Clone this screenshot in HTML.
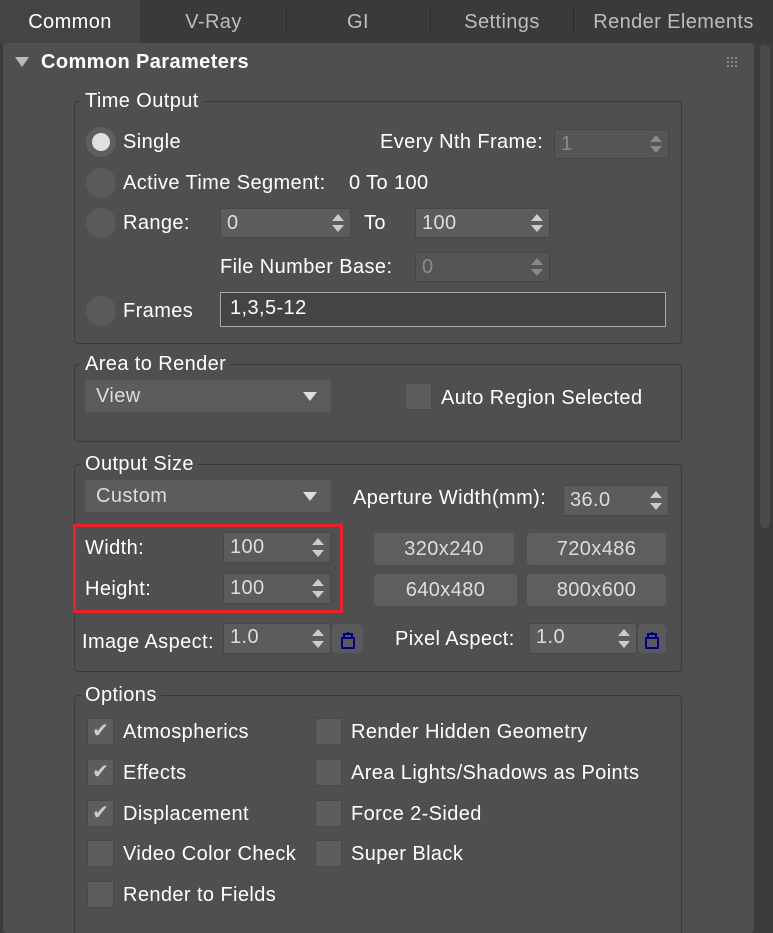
<!DOCTYPE html>
<html style="overflow:hidden;width:773px;height:933px"><head><meta charset="utf-8"><style>
*{box-sizing:border-box;margin:0;padding:0}
body{width:773px;height:933px;background:#3a3a3a;font-family:"Liberation Sans",sans-serif;color:#fff;position:relative;overflow:hidden;font-size:20px;letter-spacing:.4px}
.a{position:absolute;white-space:nowrap}
.tab{position:absolute;top:0;height:44px;line-height:44px;text-align:center;color:#bdbdbd;font-size:20px}
.sep{position:absolute;top:8px;width:1px;height:24px;background:#2c2c2c}
.panel{position:absolute;left:3px;top:43px;width:751px;height:890px;background:#4f4f4f;border-radius:4px}
.grp{position:absolute;border:1px solid #3a3a3a;border-radius:4px}
.gl{position:absolute;background:#4f4f4f;padding:0 4px;line-height:22px}
.sp{position:absolute;background:#5c5c5c;border:1px solid #474747;color:#ddd;padding-left:6px}
.sp.dis{color:#8a8a8a;background:#555}
.ar{position:absolute;right:6px;width:0;height:0;border-left:6px solid transparent;border-right:6px solid transparent}
.up{border-bottom:7px solid #ccc;top:5px}.dn{border-top:7px solid #ccc;bottom:5px}
.dis .up{border-bottom-color:#888}.dis .dn{border-top-color:#888}
.rad{position:absolute;width:30px;height:30px;border-radius:50%;background:#5a5a5a}
.cb{position:absolute;width:27px;height:27px;background:#5d5d5d;border:1px solid #4a4a4a;color:#ccc;font-size:20px;line-height:25px;text-align:center;letter-spacing:0}
.btn{position:absolute;background:#5e5e5e;border-radius:4px;color:#ddd;text-align:center}
.dd{position:absolute;background:#5c5c5c;color:#ddd;padding-left:11px}
.dd:after{content:"";position:absolute;right:14px;top:12px;border-left:7px solid transparent;border-right:7px solid transparent;border-top:9px solid #ddd}
.lock{position:absolute;background:#5a5a5a;border-radius:5px}
</style></head><body>
<div class="tab" style="left:0;width:140px;background:#444;color:#fff">Common</div>
<div class="tab" style="left:142px;width:143px">V-Ray</div>
<div class="sep" style="left:286px"></div>
<div class="tab" style="left:287px;width:142px">GI</div>
<div class="sep" style="left:430px"></div>
<div class="tab" style="left:431px;width:142px">Settings</div>
<div class="sep" style="left:573px"></div>
<div class="tab" style="left:574px;width:199px">Render Elements</div>
<div class="panel"></div>
<div class="a" style="left:754px;top:43px;width:19px;height:890px;background:#3c3c3c"></div>
<div class="a" style="left:760px;top:45px;width:10px;height:483px;background:#4a4a4a;border-radius:4px"></div>
<div class="a" style="left:15px;top:57px;border-left:7px solid transparent;border-right:7px solid transparent;border-top:10px solid #bbb"></div>
<div class="a" style="left:41px;top:51px;font-weight:bold;font-size:20px">Common Parameters</div>
<svg class="a" style="left:727px;top:57px" width="12" height="12"><g fill="#888"><rect x="0" y="0" width="2" height="2"/><rect x="4" y="0" width="2" height="2"/><rect x="8" y="0" width="2" height="2"/><rect x="0" y="4" width="2" height="2"/><rect x="4" y="4" width="2" height="2"/><rect x="8" y="4" width="2" height="2"/><rect x="0" y="8" width="2" height="2"/><rect x="4" y="8" width="2" height="2"/><rect x="8" y="8" width="2" height="2"/></g></svg>

<div class="grp" style="left:74px;top:101px;width:608px;height:243px"></div>
<div class="gl" style="left:81px;top:90px">Time Output</div>
<div class="rad" style="left:86px;top:127px;background:#5f5f5f"></div><div class="a" style="left:92px;top:133px;width:18px;height:18px;border-radius:50%;background:#e0e0e0"></div>
<div class="a" style="left:123px;top:131px">Single</div>
<div class="a" style="left:380px;top:131px">Every Nth Frame:</div>
<div class="sp dis" style="left:554px;top:129px;width:115px;height:30px;line-height:28px">1<i class="ar up"></i><i class="ar dn"></i></div>
<div class="rad" style="left:86px;top:168px"></div>
<div class="a" style="left:123px;top:172px">Active Time Segment:</div>
<div class="a" style="left:349px;top:172px">0 To 100</div>
<div class="rad" style="left:86px;top:208px"></div>
<div class="a" style="left:123px;top:212px">Range:</div>
<div class="sp" style="left:220px;top:208px;width:131px;height:30px;line-height:28px">0<i class="ar up"></i><i class="ar dn"></i></div>
<div class="a" style="left:364px;top:212px">To</div>
<div class="sp" style="left:415px;top:208px;width:135px;height:30px;line-height:28px">100<i class="ar up"></i><i class="ar dn"></i></div>
<div class="a" style="left:220px;top:256px">File Number Base:</div>
<div class="sp dis" style="left:415px;top:252px;width:135px;height:30px;line-height:28px">0<i class="ar up"></i><i class="ar dn"></i></div>
<div class="rad" style="left:86px;top:296px"></div>
<div class="a" style="left:123px;top:300px">Frames</div>
<div class="a" style="left:220px;top:292px;width:446px;height:35px;background:#444;border:1px solid #aaa;padding-left:9px;line-height:31px">1,3,5-12</div>

<div class="grp" style="left:74px;top:364px;width:608px;height:78px"></div>
<div class="gl" style="left:81px;top:353px">Area to Render</div>
<div class="dd" style="left:85px;top:380px;width:246px;height:32px;line-height:32px">View</div>
<div class="cb" style="left:405px;top:383px"></div>
<div class="a" style="left:441px;top:387px">Auto Region Selected</div>

<div class="grp" style="left:74px;top:464px;width:608px;height:208px"></div>
<div class="gl" style="left:81px;top:453px">Output Size</div>
<div class="dd" style="left:85px;top:480px;width:246px;height:32px;line-height:32px">Custom</div>
<div class="a" style="left:353px;top:487px">Aperture Width(mm):</div>
<div class="sp" style="left:563px;top:485px;width:106px;height:31px;line-height:29px">36.0<i class="ar up"></i><i class="ar dn"></i></div>
<div class="a" style="left:73px;top:524px;width:270px;height:89px;border:3px solid #e8202a"></div>
<div class="a" style="left:85px;top:537px">Width:</div>
<div class="sp" style="left:223px;top:532px;width:108px;height:31px;line-height:29px">100<i class="ar up"></i><i class="ar dn"></i></div>
<div class="a" style="left:85px;top:578px">Height:</div>
<div class="sp" style="left:223px;top:573px;width:108px;height:31px;line-height:29px">100<i class="ar up"></i><i class="ar dn"></i></div>
<div class="btn" style="left:374px;top:533px;width:140px;height:32px;line-height:32px">320x240</div>
<div class="btn" style="left:527px;top:533px;width:139px;height:32px;line-height:32px">720x486</div>
<div class="btn" style="left:374px;top:574px;width:143px;height:32px;line-height:32px">640x480</div>
<div class="btn" style="left:527px;top:574px;width:139px;height:32px;line-height:32px">800x600</div>
<div class="a" style="left:82px;top:631px">Image Aspect:</div>
<div class="sp" style="left:223px;top:623px;width:108px;height:31px;line-height:27px">1.0<i class="ar up"></i><i class="ar dn"></i></div>
<div class="lock" style="left:332px;top:624px;width:31px;height:29px"><svg width="31" height="29"><rect x="10" y="14" width="12" height="10" fill="none" stroke="#00008b" stroke-width="2"/><path d="M12 14v-4h8v4M16 8v2" fill="none" stroke="#00008b" stroke-width="2"/></svg></div>
<div class="a" style="left:395px;top:628px">Pixel Aspect:</div>
<div class="sp" style="left:529px;top:623px;width:108px;height:31px;line-height:27px">1.0<i class="ar up"></i><i class="ar dn"></i></div>
<div class="lock" style="left:638px;top:624px;width:28px;height:29px"><svg width="28" height="29"><rect x="8" y="14" width="12" height="10" fill="none" stroke="#00008b" stroke-width="2"/><path d="M10 14v-4h8v4M14 8v2" fill="none" stroke="#00008b" stroke-width="2"/></svg></div>

<div class="grp" style="left:74px;top:695px;width:608px;height:260px"></div>
<div class="gl" style="left:81px;top:684px">Options</div>
<div class="cb" style="left:87px;top:718px">✔</div><div class="a" style="left:123px;top:721px">Atmospherics</div>
<div class="cb" style="left:87px;top:759px">✔</div><div class="a" style="left:123px;top:762px">Effects</div>
<div class="cb" style="left:87px;top:800px">✔</div><div class="a" style="left:123px;top:803px">Displacement</div>
<div class="cb" style="left:87px;top:840px"></div><div class="a" style="left:123px;top:843px">Video Color Check</div>
<div class="cb" style="left:87px;top:881px"></div><div class="a" style="left:123px;top:884px">Render to Fields</div>
<div class="cb" style="left:315px;top:718px"></div><div class="a" style="left:351px;top:721px">Render Hidden Geometry</div>
<div class="cb" style="left:315px;top:759px"></div><div class="a" style="left:351px;top:762px">Area Lights/Shadows as Points</div>
<div class="cb" style="left:315px;top:800px"></div><div class="a" style="left:351px;top:803px">Force 2-Sided</div>
<div class="cb" style="left:315px;top:840px"></div><div class="a" style="left:351px;top:843px">Super Black</div>
</body></html>
